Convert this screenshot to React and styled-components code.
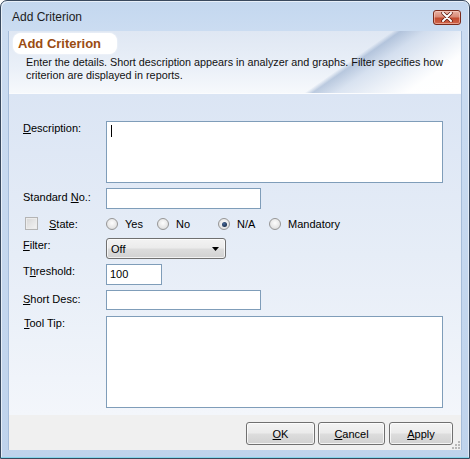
import React from "react";
import styled, { createGlobalStyle } from "styled-components";

const Global = createGlobalStyle`
  html, body { margin: 0; padding: 0; background: #fff; }
  body { font-family: "Liberation Sans", Arial, sans-serif; font-size: 11px; color: #000; }
  * { box-sizing: border-box; }
`;

const Window = styled.div`
  width: 470px;
  height: 459px;
  border: 1px solid #39495e;
  border-radius: 7px 7px 0 0;
  background: linear-gradient(to bottom, #c3d7ef 0px, #cbdcf1 30px, #bfd3ec 100%);
  box-shadow: inset 0 -1px 0 #86d4ea, inset 1px 1px 0 rgba(255,255,255,0.6), inset -1px 0 0 rgba(255,255,255,0.5);
  display: flex;
  flex-direction: column;
  padding-bottom: 8px;
  overflow: hidden;
`;

const TitleBar = styled.div`
  height: 30px;
  flex: none;
  display: flex;
  align-items: center;
  justify-content: space-between;
  padding: 2px 8px 0 11px;
`;

const Title = styled.span`
  font-size: 12px;
  color: #1c1c1c;
`;

const CloseBtn = styled.div`
  width: 28px;
  height: 15px;
  border: 1px solid #7a2b1c;
  border-radius: 3px;
  background: linear-gradient(to bottom, #eab2a4 0%, #d98a77 45%, #c24b30 55%, #d0654b 100%);
  box-shadow: inset 0 0 0 1px rgba(255,220,210,0.5);
  display: flex;
  align-items: center;
  justify-content: center;
`;

const Client = styled.div`
  flex: 1;
  margin: 0 7px;
  border-left: 1px solid #a5bcd9;
  border-right: 1px solid #a5bcd9;
  display: flex;
  flex-direction: column;
  background: #f0f0f0;
`;

const Header = styled.div`
  height: 63px;
  flex: none;
  border-bottom: 1px solid #fbfcfe;
  background:
    linear-gradient(145deg, rgba(255,255,255,0) 71%, rgba(140,165,200,0.55) 72.5%, rgba(200,214,234,0.6) 77%, rgba(255,255,255,0.95) 90%, #fff 100%),
    linear-gradient(to bottom, #dfe7f3 0%, #eaf0f8 60%, #f7f9fc 100%);
  padding: 2px 0 0 4px;
`;

const Badge = styled.div`
  display: inline-block;
  height: 21px;
  padding: 0 16px 0 5px;
  border-radius: 8px;
  background: #fff;
  box-shadow: 0 0 2px rgba(255,255,255,0.9);
  font-size: 13px;
  font-weight: bold;
  line-height: 21px;
  color: #9a4c12;
`;

const Intro = styled.div`
  margin: 2px 0 0 13px;
  font-size: 10.8px;
  line-height: 13px;
  color: #111;
  white-space: nowrap;
`;

const Body = styled.div`
  flex: 1;
  background: linear-gradient(to bottom, #dbe5f4 0%, #e6edf7 50%, #f3f6fb 100%);
  padding: 27px 0 0 14px;
  display: flex;
  flex-direction: column;
  gap: 5px;
`;

const Row = styled.div`
  display: flex;
  align-items: flex-start;
  height: ${(p) => p.$h}px;
`;

const Label = styled.div`
  width: 83px;
  flex: none;
  line-height: 13px;
  padding-top: ${(p) => p.$dy || 0}px;
  padding-left: ${(p) => p.$dx || 0}px;
  white-space: nowrap;
`;

const TextBox = styled.div`
  width: ${(p) => p.$w}px;
  height: ${(p) => p.$h}px;
  border: 1px solid #7f9db9;
  background: #fff;
  padding: 3px 3px;
  line-height: 13px;
  font-size: 11px;
`;

const Caret = styled.span`
  display: inline-block;
  width: 1px;
  height: 12px;
  background: #000;
  margin-left: 1px;
`;

const StateLabel = styled.div`
  width: 83px;
  flex: none;
  display: flex;
  align-items: center;
  height: 19px;
  padding-left: 2px;
`;

const Check = styled.span`
  width: 13px;
  height: 13px;
  border: 1px solid #b4b4b4;
  background: linear-gradient(135deg, #d6d6d6, #f4f4f4);
  box-shadow: inset 0 0 0 1px #ececec;
  margin-right: 11px;
`;

const RadioItem = styled.div`
  width: ${(p) => p.$w}px;
  flex: none;
  display: flex;
  align-items: center;
  height: 20px;
  white-space: nowrap;
`;

const RadioCircle = styled.span`
  width: 12px;
  height: 12px;
  border-radius: 50%;
  border: 1px solid #969696;
  background: radial-gradient(circle at 50% 40%, #fdfdfd 0%, #e6e6e6 60%, #cfcfcf 100%);
  display: flex;
  align-items: center;
  justify-content: center;
  margin-right: 7px;
  flex: none;
`;

const RadioDot = styled.span`
  width: 5px;
  height: 5px;
  border-radius: 50%;
  background: radial-gradient(circle at 40% 35%, #4a6b9a, #0d1c33);
`;

const vistaGradient = `linear-gradient(to bottom, #f3f3f3 0%, #ebebeb 48%, #dddddd 52%, #d1d1d1 100%)`;

const Combo = styled.div`
  width: 120px;
  height: 21px;
  border: 1px solid #707070;
  border-radius: 3px;
  background: ${vistaGradient};
  box-shadow: inset 0 0 0 1px rgba(255,255,255,0.7);
  display: flex;
  align-items: center;
  justify-content: space-between;
  padding: 0 6px 0 4px;
`;

const Footer = styled.div`
  height: 35px;
  flex: none;
  background: #f0f0f0;
  display: flex;
  justify-content: flex-end;
  align-items: flex-start;
  padding: 7px 8px 0 0;
  position: relative;
`;

const Button = styled.div`
  width: ${(p) => p.$w}px;
  height: 23px;
  margin-left: ${(p) => p.$ml || 0}px;
  border: 1px solid #707070;
  border-radius: 3px;
  background: ${vistaGradient};
  box-shadow: inset 0 0 0 1px rgba(255,255,255,0.75);
  display: flex;
  align-items: center;
  justify-content: center;
  font-size: 11px;
`;

const Grip = styled.svg`
  position: absolute;
  right: 1px;
  bottom: 1px;
`;

export default function App() {
  return (
    <>
      <Global />
      <Window>
        <TitleBar>
          <Title>Add Criterion</Title>
          <CloseBtn>
            <svg width="12" height="10" viewBox="0 0 12 10">
              <path d="M2 1 L10 9 M10 1 L2 9" stroke="#5a1a10" strokeWidth="3.4" strokeLinecap="round" />
              <path d="M2 1 L10 9 M10 1 L2 9" stroke="#fff" strokeWidth="2" strokeLinecap="round" />
            </svg>
          </CloseBtn>
        </TitleBar>
        <Client>
          <Header>
            <Badge>Add Criterion</Badge>
            <Intro>
              Enter the details. Short description appears in analyzer and graphs. Filter specifies how
              <br />
              criterion are displayed in reports.
            </Intro>
          </Header>
          <Body>
            <Row $h={62}>
              <Label $dy={1}><u>D</u>escription:</Label>
              <TextBox $w={337} $h={62}><Caret /></TextBox>
            </Row>
            <Row $h={21}>
              <Label $dy={3}>Standard <u>N</u>o.:</Label>
              <TextBox $w={155} $h={21} />
            </Row>
            <Row $h={19}>
              <StateLabel>
                <Check />
                <span><u>S</u>tate:</span>
              </StateLabel>
              <RadioItem $w={51}><RadioCircle /> Yes</RadioItem>
              <RadioItem $w={61}><RadioCircle /> No</RadioItem>
              <RadioItem $w={51}><RadioCircle><RadioDot /></RadioCircle> N/A</RadioItem>
              <RadioItem $w={90}><RadioCircle /> Mandatory</RadioItem>
            </Row>
            <Row $h={21}>
              <Label $dy={1}><u>F</u>ilter:</Label>
              <Combo>
                <span>Off</span>
                <svg width="7" height="4" viewBox="0 0 7 4">
                  <path d="M0 0 H7 L3.5 4 Z" fill="#000" />
                </svg>
              </Combo>
            </Row>
            <Row $h={21}>
              <Label $dy={1} $dx={-1}>T<u>h</u>reshold:</Label>
              <TextBox $w={56} $h={21}>100</TextBox>
            </Row>
            <Row $h={21}>
              <Label $dy={3}><u>S</u>hort Desc:</Label>
              <TextBox $w={155} $h={20} />
            </Row>
            <Row $h={92}>
              <Label $dy={1} $dx={1}><u>T</u>ool Tip:</Label>
              <TextBox $w={337} $h={92} />
            </Row>
          </Body>
          <Footer>
            <Button $w={69}><span><u>O</u>K</span></Button>
            <Button $w={67} $ml={3}><span><u>C</u>ancel</span></Button>
            <Button $w={64} $ml={4}><span><u>A</u>pply</span></Button>
            <Grip width="8" height="8" viewBox="0 0 8 8">
              <g fill="#b8b8b8">
                <rect x="6" y="0" width="2" height="2" />
                <rect x="3" y="3" width="2" height="2" />
                <rect x="6" y="3" width="2" height="2" />
                <rect x="0" y="6" width="2" height="2" />
                <rect x="3" y="6" width="2" height="2" />
                <rect x="6" y="6" width="2" height="2" />
              </g>
            </Grip>
          </Footer>
        </Client>
      </Window>
    </>
  );
}
